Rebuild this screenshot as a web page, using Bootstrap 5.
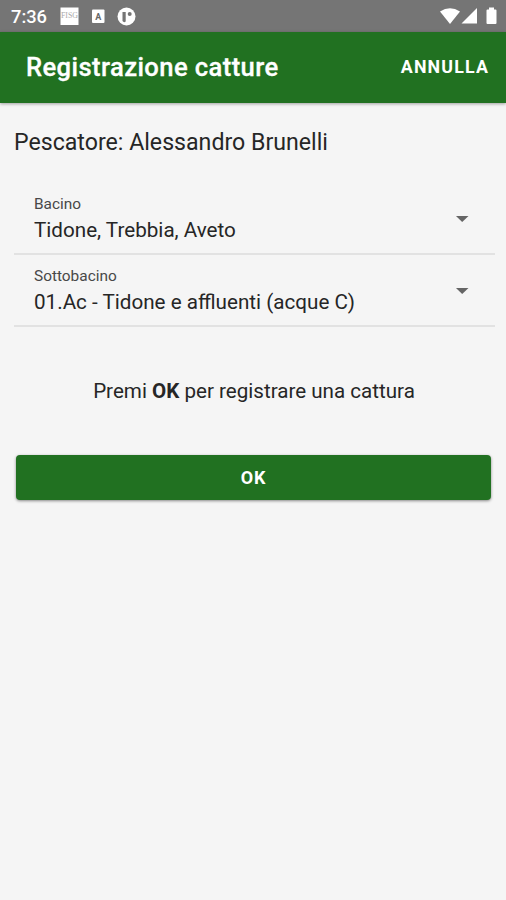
<!DOCTYPE html>
<html lang="it">
<head>
<meta charset="utf-8">
<meta name="viewport" content="width=device-width, initial-scale=1">
<title>Registrazione catture</title>
<link href="https://cdn.jsdelivr.net/npm/bootstrap@5.3.0/dist/css/bootstrap.min.css" rel="stylesheet">
<style>
body{font-family:Roboto,"Liberation Sans",sans-serif;background:#f5f5f5;color:#262626;min-height:900px;overflow:hidden}
.status{height:32px;background:#757575;color:#fff;padding:0 8px 0 11px}
.clock{font-size:18.3px;font-weight:500;line-height:32px;width:49px;padding-top:1px}
.appbar{height:71px;background:#217121;padding:0 17px 0 26px;box-shadow:0 1px 3px rgba(0,0,0,.35)}
.title{font-size:25.6px;font-weight:500;line-height:30px;letter-spacing:.4px;margin-top:-2px;-webkit-text-stroke:.3px #fff}
.cancel{font-size:17.8px;font-weight:700;letter-spacing:1.15px;line-height:28px;color:#fff;margin-top:-1px}
.main-area{padding:26px 11px 0 14px}
.fisher{font-size:23.15px;line-height:28px}
.fields{padding-top:26px}
.field{height:72px;padding:11px 25px 0 20px;border-bottom:2px solid #e2e2e2}
.field-label{font-size:15.4px;line-height:20px;color:#484848}
.field-value{font-size:20.65px;line-height:28px;margin-top:2px}
.caret{margin-bottom:10px}
.hint{font-size:20.6px;line-height:28px;margin-top:50px;padding-right:1px}
.hint strong{font-weight:700}
.ok-btn{height:45px;margin:50px 3px 0 2px;width:475px;background:#217121;color:#fff;border:0;border-radius:4px;font-size:18px;font-weight:700;letter-spacing:.8px;line-height:44px;box-shadow:0 1px 3px rgba(0,0,0,.45)}
</style>
</head>
<body>
<header>
<div class="status d-flex align-items-center justify-content-between">
  <div class="d-flex align-items-center">
    <span class="clock">7:36</span>
    <svg width="78" height="20" viewBox="0 0 78 20">
      <rect x="0.5" y="1.5" width="18" height="17.500" fill="#fff"/>
      <text x="9.500" y="11.500" font-size="7.500" text-anchor="middle" fill="#aaa" font-family="Liberation Serif,serif" textLength="17" lengthAdjust="spacingAndGlyphs">FISG</text>
      <rect x="32" y="3.500" width="12.500" height="13.500" rx="1" fill="#fff"/>
      <text x="38.200" y="13.500" font-size="9" font-weight="700" text-anchor="middle" fill="#666">A</text>
      <circle cx="66.500" cy="10.500" r="9" fill="#fff"/>
      <path d="M62.500 6h3.200v9.500q-1.800 1.500-3.200-.5z" fill="#757575"/>
      <circle cx="69.700" cy="8" r="2" fill="#757575"/>
    </svg>
  </div>
  <svg width="58" height="20" viewBox="0 0 58 20">
    <path d="M0 5.500Q10-1 20 5.500L10 18z" fill="#fff"/>
    <path d="M37 2v15.500H21.500z" fill="#fff"/>
    <path d="M49 1.500h5v2h1.500q1 0 1 1V17q0 1-1 1h-8q-1 0-1-1V4.500q0-1 1-1H49z" fill="#fff"/>
  </svg>
</div>
<nav class="appbar d-flex align-items-center justify-content-between text-white">
  <span class="title">Registrazione catture</span>
  <a class="cancel text-decoration-none" href="#">ANNULLA</a>
</nav>
</header>
<main class="main-area">
  <div class="fisher">Pescatore: Alessandro Brunelli</div>
  <div class="fields">
    <div class="field d-flex justify-content-between">
      <div><div class="field-label">Bacino</div><div class="field-value">Tidone, Trebbia, Aveto</div></div>
      <svg class="caret align-self-center" width="16" height="8" viewBox="0 0 16 8"><path d="M2 1h12.500L8.200 7z" fill="#656565"/></svg>
    </div>
    <div class="field d-flex justify-content-between">
      <div><div class="field-label">Sottobacino</div><div class="field-value">01.Ac - Tidone e affluenti (acque C)</div></div>
      <svg class="caret align-self-center" width="16" height="8" viewBox="0 0 16 8"><path d="M2 1h12.500L8.200 7z" fill="#656565"/></svg>
    </div>
  </div>
  <div class="hint text-center">Premi <strong>OK</strong> per registrare una cattura</div>
  <button class="ok-btn btn d-block p-0" type="button">OK</button>
</main>
<script src="https://cdn.jsdelivr.net/npm/bootstrap@5.3.0/dist/js/bootstrap.bundle.min.js"></script>
</body>
</html>
